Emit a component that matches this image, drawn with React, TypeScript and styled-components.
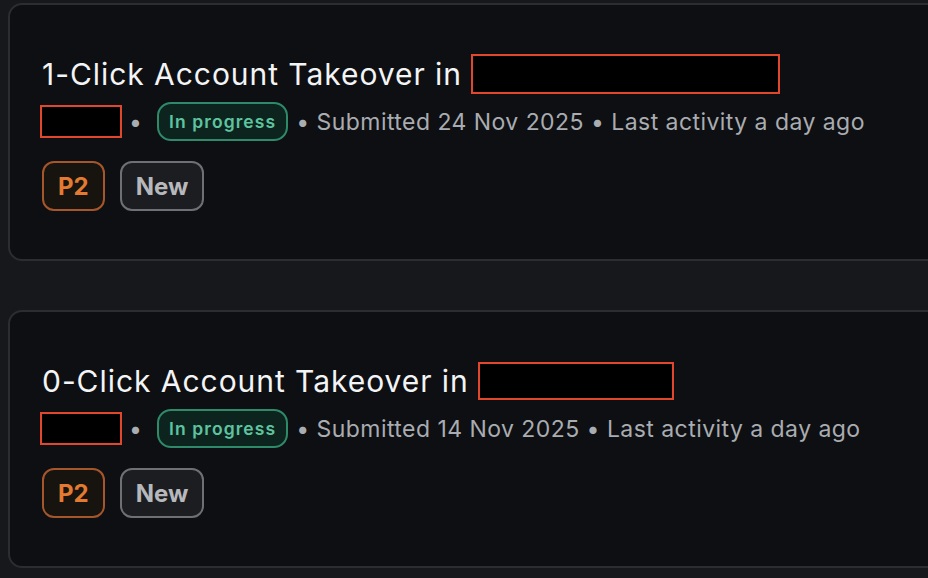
import React from 'react'
import styled, { createGlobalStyle } from 'styled-components'

const GlobalStyle = createGlobalStyle`
  html, body {
    margin: 0;
    padding: 0;
    background: #16181b;
    overflow: hidden;
  }
  body {
    font-family: Inter, "Noto Sans", "Liberation Sans", sans-serif;
  }
`

const Page = styled.main`
  width: 928px;
  height: 578px;
  overflow: hidden;
  padding: 3px 0 0 8px;
  box-sizing: border-box;
  display: flex;
  flex-direction: column;
  gap: 49px;
`

const Card = styled.section`
  width: 1000px;
  box-sizing: border-box;
  background: #0e0f12;
  border: 2px solid #2b2d31;
  border-radius: 14px;
  padding: 49px 32px 48px;
  display: flex;
  flex-direction: column;
`

const Title = styled.h2`
  margin: 0;
  height: 40px;
  display: flex;
  align-items: center;
  gap: 9px;
  font-size: 30px;
  font-weight: 400;
  letter-spacing: 0.95px;
  color: #f3f4f5;
  white-space: nowrap;
`

const Redacted = styled.span<{ $w: number; $h: number }>`
  display: inline-block;
  width: ${p => p.$w}px;
  height: ${p => p.$h}px;
  box-sizing: border-box;
  background: #000;
  border: 2px solid #e0472c;
`

const Meta = styled.div`
  margin-top: 8px;
  height: 39px;
  display: flex;
  align-items: center;
  font-size: 23px;
  color: #a9acb1;
  white-space: nowrap;
`

const MetaRedacted = styled(Redacted)`
  margin-left: -2px;
`

const Sep = styled.span`
  margin: 0 15px 0 7px;
`

const Status = styled.span`
  height: 39px;
  box-sizing: border-box;
  display: inline-flex;
  align-items: center;
  padding: 0 10px;
  border: 2px solid #2e8a69;
  border-radius: 14px;
  background: #0d241e;
  color: #5ec4a0;
  font-size: 17.5px;
  font-weight: 600;
  letter-spacing: 1.1px;
`

const MetaText = styled.span`
  margin-left: 8px;
  letter-spacing: 0.45px;
`

const Badges = styled.div`
  margin-top: 20px;
  display: flex;
  gap: 15px;
`

const Badge = styled.span<{ $tone: 'priority' | 'state' }>`
  height: 50px;
  box-sizing: border-box;
  display: inline-flex;
  align-items: center;
  padding: 0 14px;
  border-radius: 12px;
  border: 2px solid ${p => (p.$tone === 'priority' ? '#a5562b' : '#6f7075')};
  background: ${p => (p.$tone === 'priority' ? '#17130f' : '#1c1d21')};
  color: ${p => (p.$tone === 'priority' ? '#e27b31' : '#b7b8bc')};
  font-size: 24px;
  font-weight: 700;
`

const reports = [
  { id: 1, title: '1-Click Account Takeover in', redact: 309, redactH: 40, submitted: '24 Nov 2025' },
  { id: 0, title: '0-Click Account Takeover in', redact: 196, redactH: 38, submitted: '14 Nov 2025' },
]

export default function App() {
  return (
    <>
      <GlobalStyle />
      <Page>
        {reports.map(r => (
          <Card key={r.id}>
            <Title>
              {r.title}
              <Redacted $w={r.redact} $h={r.redactH} />
            </Title>
            <Meta>
              <MetaRedacted $w={82} $h={33} />
              <Sep>•</Sep>
              <Status>In progress</Status>
              <MetaText>• Submitted {r.submitted} • Last activity a day ago</MetaText>
            </Meta>
            <Badges>
              <Badge $tone="priority">P2</Badge>
              <Badge $tone="state">New</Badge>
            </Badges>
          </Card>
        ))}
      </Page>
    </>
  )
}
